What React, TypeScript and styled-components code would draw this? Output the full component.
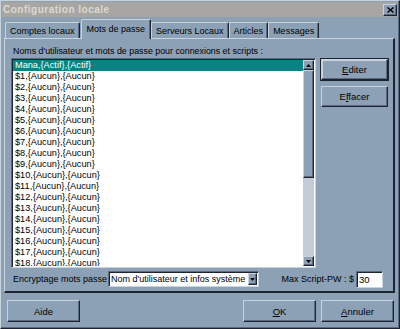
import React from "react";
import styled, { createGlobalStyle, css } from "styled-components";

const C = {
  face: "#8ca0b6",
  light: "#c9d3de",
  shadow: "#5b6a80",
  dark: "#1c2430",
  title: "#a8a6a3",
  titleText: "#dcd8d2",
  track: "#c3ccd7",
  sel: "#0a8282",
};

const font = `"Liberation Sans", Arial, sans-serif`;

const Global = createGlobalStyle`
  html, body { margin: 0; padding: 0; background: ${C.face}; }
  * { box-sizing: border-box; }
`;

const raised = css`
  border: 1px solid;
  border-color: ${C.light} ${C.dark} ${C.dark} ${C.light};
  box-shadow: inset -1px -1px 0 ${C.shadow};
`;

const sunken = css`
  border: 1px solid;
  border-color: ${C.shadow} ${C.light} ${C.light} ${C.shadow};
  box-shadow: inset 1px 1px 0 ${C.dark};
`;

const Window = styled.div`
  width: 400px;
  height: 329px;
  background: ${C.face};
  ${raised};
  padding: 1px;
  display: flex;
  flex-direction: column;
  font-family: ${font};
  font-size: 9px;
  color: #000;
`;

const TitleBar = styled.div`
  height: 15px;
  background: ${C.title};
  display: flex;
  align-items: center;
  justify-content: space-between;
  padding: 0 1px 0 1px;
`;

const TitleText = styled.span`
  font-weight: bold;
  font-size: 10px;
  letter-spacing: 0.5px;
  color: ${C.titleText};
`;

const CloseButton = styled.div`
  width: 14px;
  height: 12px;
  background: ${C.face};
  ${raised};
  display: flex;
  align-items: center;
  justify-content: center;
`;

const TabArea = styled.div`
  margin: 2px 3px 0 2px;
  display: flex;
  flex-direction: column;
`;

const TabStrip = styled.div`
  height: 19px;
  display: flex;
  align-items: flex-end;
  padding-left: 1px;
`;

const Tab = styled.div<{ $active?: boolean }>`
  position: relative;
  height: ${(p) => (p.$active ? 20 : 16)}px;
  margin: ${(p) => (p.$active ? "0 0 -1px 1px" : "0")};
  z-index: ${(p) => (p.$active ? 1 : 0)};
  padding: 0 ${(p) => (p.$active ? 5 : 4)}px;
  background: ${C.face};
  border-top: 1px solid ${C.light};
  border-left: 1px solid ${C.light};
  border-right: 1px solid ${C.dark};
  box-shadow: inset -1px 0 0 ${C.shadow};
  border-top-left-radius: 2px;
  border-top-right-radius: 2px;
  display: flex;
  align-items: center;
  padding-bottom: ${(p) => (p.$active ? 2 : 0)}px;
  white-space: nowrap;
`;

const Panel = styled.div`
  height: 255px;
  border: 1px solid;
  border-color: ${C.light} ${C.dark} ${C.dark} ${C.light};
  border-right-width: 2px;
  border-bottom-width: 2px;
  padding: 7px 5px 3px 6px;
  display: flex;
  flex-direction: column;
`;

const Caption = styled.div`
  height: 11px;
  line-height: 11px;
  margin-left: 2px;
  margin-bottom: 1px;
  font-size: 8.85px;
  white-space: nowrap;
`;

const ListRow = styled.div`
  display: flex;
  gap: 5px;
  height: 210px;
`;

const ListBox = styled.div`
  width: 305px;
  height: 210px;
  background: #fff;
  ${sunken};
  padding: 1px 1px 1px 1px;
  display: flex;
`;

const Rows = styled.div`
  flex: 1;
  overflow: hidden;
`;

const Row = styled.div<{ $selected?: boolean }>`
  height: 11px;
  line-height: 11px;
  padding-left: 2px;
  font-size: 9.2px;
  white-space: nowrap;
  background: ${(p) => (p.$selected ? C.sel : "transparent")};
  color: ${(p) => (p.$selected ? "#fff" : "#000")};
`;

const ScrollBar = styled.div`
  width: 11px;
  display: flex;
  flex-direction: column;
  background: ${C.track};
`;

const ScrollButton = styled.div`
  width: 11px;
  height: 10px;
  background: ${C.face};
  ${raised};
  display: flex;
  align-items: center;
  justify-content: center;
`;

const Thumb = styled.div`
  height: 108px;
  background: ${C.face};
  ${raised};
`;

const Track = styled.div`
  flex: 1;
`;

const SideButtons = styled.div`
  display: flex;
  flex-direction: column;
  gap: 6px;
  padding-top: 1px;
`;

const Button = styled.div<{ $w?: number; $h?: number; $default?: boolean }>`
  width: ${(p) => p.$w ?? 67}px;
  height: ${(p) => p.$h ?? 21}px;
  background: ${C.face};
  border: 1px solid;
  border-color: ${C.light} ${C.dark} ${C.dark} ${C.light};
  box-shadow: inset -1px -1px 0 ${C.shadow};
  display: flex;
  align-items: center;
  justify-content: center;
  font-size: 9.5px;
  ${(p) =>
    p.$default &&
    css`
      outline: 1px solid ${C.dark};
      box-shadow: inset -1px -1px 0 ${C.shadow}, inset 1px 1px 0 ${C.light};
    `}
  u {
    text-decoration: underline;
  }
`;

const BottomRow = styled.div`
  margin-top: 2px;
  height: 18px;
  display: flex;
  align-items: center;
`;

const FieldLabel = styled.span<{ $ml?: number }>`
  margin-left: ${(p) => p.$ml ?? 0}px;
  white-space: nowrap;
`;

const Select = styled.div`
  margin-left: 1px;
  width: 151px;
  height: 16px;
  background: #fff;
  ${sunken};
  display: flex;
  align-items: stretch;
  padding: 1px 1px 1px 2px;
`;

const SelectText = styled.span`
  flex: 1;
  line-height: 12px;
  white-space: nowrap;
  overflow: hidden;
`;

const DropButton = styled.div`
  width: 9px;
  background: ${C.face};
  ${raised};
  display: flex;
  align-items: center;
  justify-content: center;
`;

const Spacer = styled.div`
  flex: 1;
`;

const NumInput = styled.div`
  margin-left: 2px;
  margin-right: 5px;
  width: 27px;
  height: 17px;
  background: #fff;
  ${sunken};
  padding: 1px 2px;
  line-height: 13px;
  font-size: 9.5px;
`;

const Footer = styled.div`
  margin-top: 7px;
  padding: 0 4px 0 5px;
  display: flex;
  gap: 5px;
`;

const Arrow = ({ down }: { down?: boolean }) => (
  <svg width="5" height="3" viewBox="0 0 5 3">
    <polygon points={down ? "0,0 5,0 2.5,3" : "0,3 5,3 2.5,0"} fill="#000" />
  </svg>
);

const rows = [
  "Mana,{Actif},{Actif}",
  ...Array.from({ length: 18 }, (_, i) => `$${i + 1},{Aucun},{Aucun}`),
];

export default function App() {
  return (
    <>
      <Global />
      <Window>
        <TitleBar>
          <TitleText>Configuration locale</TitleText>
          <CloseButton>
            <svg width="7" height="6" viewBox="0 0 7 6">
              <path d="M0.5 0.5 L6.5 5.5 M6.5 0.5 L0.5 5.5" stroke="#000" strokeWidth="1.5" />
            </svg>
          </CloseButton>
        </TitleBar>
        <TabArea>
          <TabStrip>
            <Tab>Comptes locaux</Tab>
            <Tab $active>Mots de passe</Tab>
            <Tab>Serveurs Locaux</Tab>
            <Tab>Articles</Tab>
            <Tab>Messages</Tab>
          </TabStrip>
          <Panel>
            <Caption>Noms d'utilisateur et mots de passe pour connexions et scripts :</Caption>
            <ListRow>
              <ListBox>
                <Rows>
                  {rows.map((r, i) => (
                    <Row key={r} $selected={i === 0}>
                      {r}
                    </Row>
                  ))}
                </Rows>
                <ScrollBar>
                  <ScrollButton>
                    <Arrow />
                  </ScrollButton>
                  <Thumb />
                  <Track />
                  <ScrollButton>
                    <Arrow down />
                  </ScrollButton>
                </ScrollBar>
              </ListBox>
              <SideButtons>
                <Button $default>
                  <span>
                    <u>E</u>diter
                  </span>
                </Button>
                <Button>
                  <span>
                    E<u>f</u>facer
                  </span>
                </Button>
              </SideButtons>
            </ListRow>
            <BottomRow>
              <FieldLabel $ml={2}>Encryptage mots passe</FieldLabel>
              <Select>
                <SelectText>Nom d'utilisateur et infos système</SelectText>
                <DropButton>
                  <Arrow down />
                </DropButton>
              </Select>
              <Spacer />
              <FieldLabel>Max Script-PW : $</FieldLabel>
              <NumInput>30</NumInput>
            </BottomRow>
          </Panel>
        </TabArea>
        <Footer>
          <Button $w={73} $h={22}>Aide</Button>
          <Spacer />
          <Button $w={73} $h={22}>
            <span>
              <u>O</u>K
            </span>
          </Button>
          <Button $w={73} $h={22}>
            <span>
              <u>A</u>nnuler
            </span>
          </Button>
        </Footer>
      </Window>
    </>
  );
}
